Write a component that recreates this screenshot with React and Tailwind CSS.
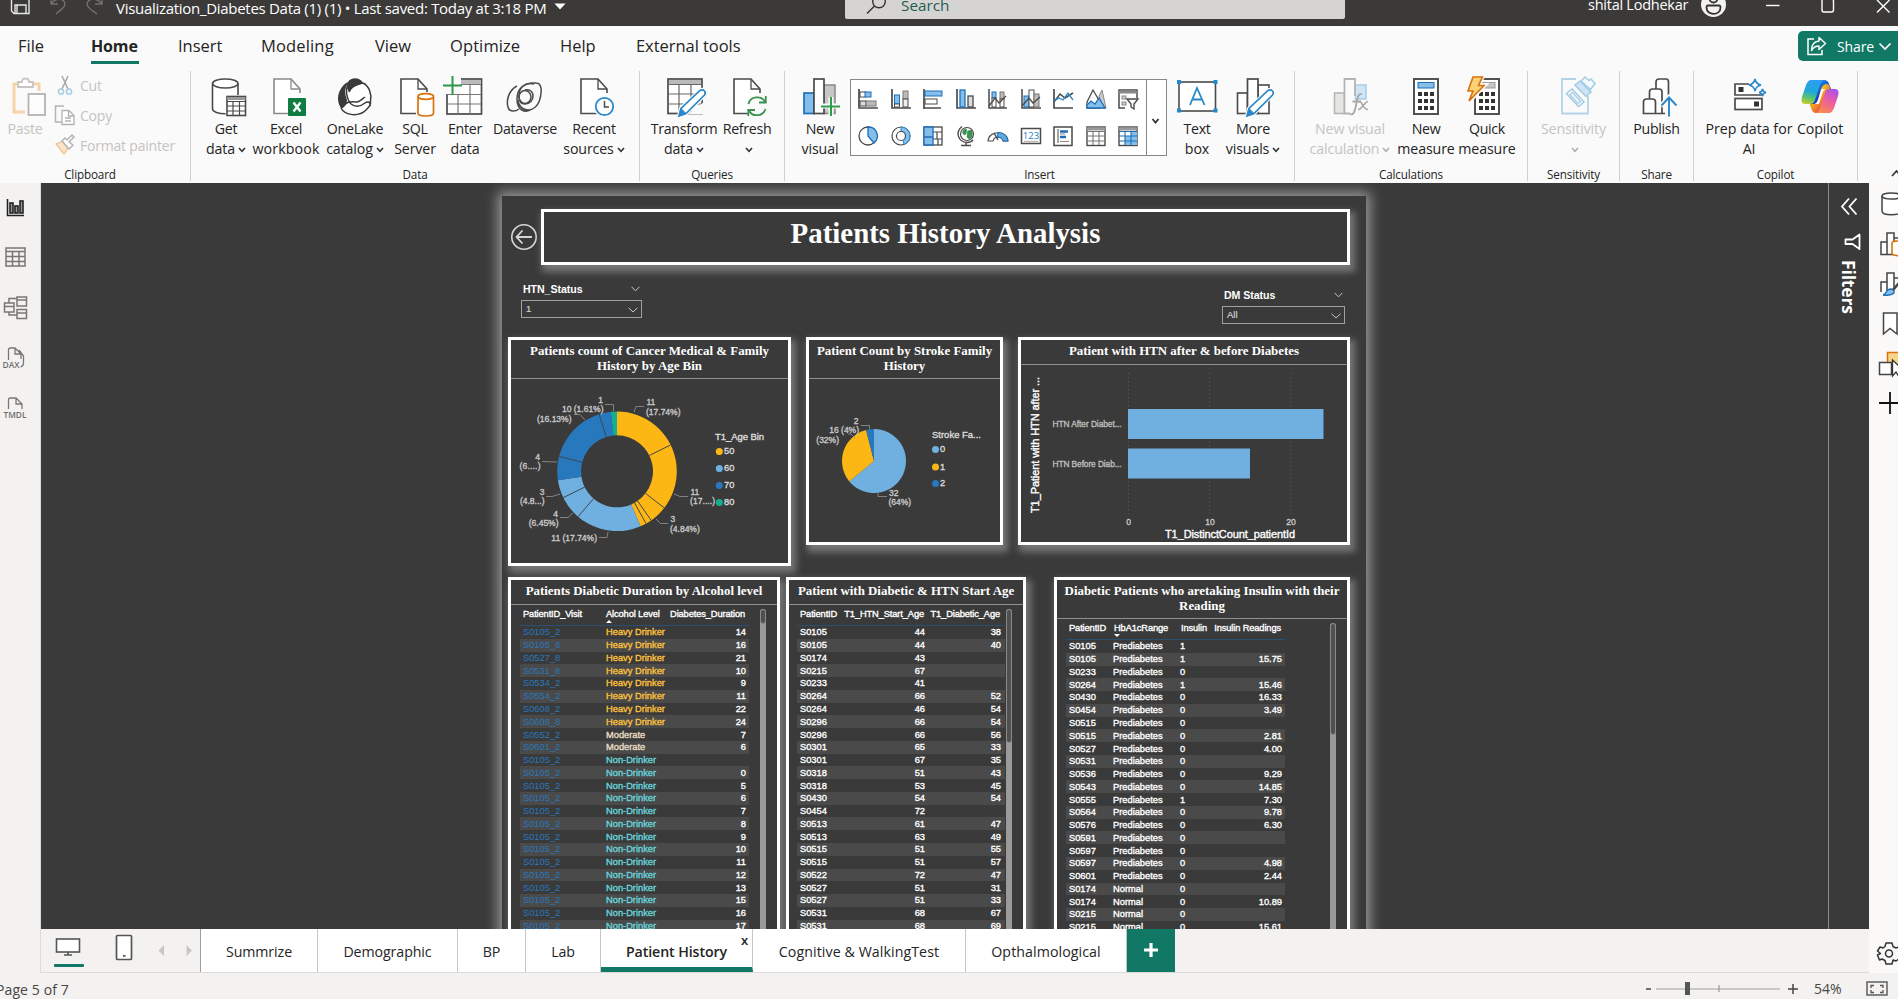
import React from "react";

const G = "#4a4a4a";

/* ---------- shared icon parts ---------- */

const Svg = ({ w = 40, h = 42, className = "", children, vb }) => (
  <svg width={w} height={h} viewBox={vb || `0 0 ${w} ${h}`} fill="none" className={`block shrink-0 overflow-visible ${className}`}>
    {children}
  </svg>
);

const PageShape = ({ x, stroke = G }) => (
  <g stroke={stroke} strokeWidth="1.6">
    <path d={`M${x + 26} 17V13L${x + 17} 3H${x}V37.5H${x + 16}`} fill="#fff" />
    <path d={`M${x + 17} 3V13H${x + 26}`} strokeWidth="1.3" />
  </g>
);

const Pencil = ({ x = 0, y = 0 }) => (
  <g transform={`translate(${x} ${y})`}>
    <path d="M13 40L15 32.5L34 14.5Q36.500 13 38.500 15Q40 17 38.500 19L20 37.500Z" fill="#fff" stroke="#fafafa" strokeWidth="4" />
    <path d="M13 40L15 32.5L34 14.5Q36.500 13 38.500 15Q40 17 38.500 19L20 37.500Z" fill="#fff" stroke="#2b88c8" strokeWidth="1.7" />
    <path d="M13 40L15 32.5L20 37.5Z" fill="#2b88c8" stroke="#2b88c8" />
  </g>
);

const Calc = ({ x, fill, stroke, w = 24 }) => (
  <g>
    <rect x={x} y="3" width={w} height="35" fill="#fff" stroke={G} strokeWidth="1.9" />
    <rect x={x + 4} y="6.500" width={w - 8} height="5.500" fill={fill} stroke={stroke} />
    {[16, 23, 30].map((yy) =>
      [4, 10, 16].map((xx) => <rect key={yy + "-" + xx} x={x + xx} y={yy} width="4" height="4" fill="#333" />)
    )}
  </g>
);

/* ---------- ribbon icons ---------- */

const GetData = () => (
  <Svg>
    <path d="M6.500 7.500V32.500C6.500 39.500 32 39.500 32 32.500V7.500" fill="#fff" stroke={G} strokeWidth="1.6" />
    <ellipse cx="19.300" cy="7.500" rx="12.700" ry="4.500" fill="#fff" stroke={G} strokeWidth="1.6" />
    <rect x="19.500" y="19" width="22" height="22" fill="#fafafa" />
    <rect x="21" y="20.500" width="18.500" height="19" fill="#fff" stroke={G} strokeWidth="1.6" />
    <path d="M21 22.500H39.500" stroke="#999" strokeWidth="3" />
    <path d="M21 25.500H39.500M21 30H39.500M21 35H39.500M27 25V39M33.500 25V39" stroke={G} strokeWidth="1.2" />
  </Svg>
);
const Excel = () => (
  <Svg>
    <PageShape x={8} stroke="#8a8a8a" />
    <rect x="22" y="22" width="18" height="18" rx="1" fill="#107c41" />
    <path d="M27.500 26.500L34.500 35.500M34.500 26.500L27.500 35.500" stroke="#fff" strokeWidth="2.400" />
  </Svg>
);
const OneLake = () => (
  <Svg>
    <circle cx="20" cy="21" r="15.500" fill="#fff" />
    <path d="M11 7C2 14 1 25 6 32C9 33 12 28 12 24C9 16 10 11 14 6Z" fill="#3a3a3a" />
    <path d="M13 6C16 1 25 1 28 7C24 9 18 10 14 16C12 12 11 9 13 6Z" fill="#3a3a3a" />
    <path d="M14 7C10 13 11 22 16 28C20 31 25 31 30 27C33 25 36 26 35 30M28 7C34 10 37 18 35.500 25M6 32C10 40 24 41 31 34C34 31 36 29 35.500 25M14 16C16 10 22 8 28 7M6 32C12 24 18 26 22 26C26 25 27 23 30 21" stroke="#3a3a3a" strokeWidth="1.500" />
  </Svg>
);
const Sql = () => (
  <Svg>
    <PageShape x={6} />
    <path d="M21 16H41V42H21Z" fill="#fafafa" />
    <path d="M23 21V37C23 41 38.500 41 38.500 37V21" fill="#fff" stroke="#d9730d" strokeWidth="1.700" />
    <ellipse cx="30.750" cy="20.500" rx="7.750" ry="2.800" fill="#fff" stroke="#d9730d" strokeWidth="1.700" />
  </Svg>
);
const EnterData = () => (
  <Svg>
    <rect x="2" y="3" width="34.500" height="35" fill="#fff" stroke={G} strokeWidth="1.700" />
    <rect x="13" y="4" width="23" height="4" fill="#bbb" />
    <path d="M2 8.500H36M2 18.500H36M2 28H36M13 9V38M25 9V38" stroke="#777" strokeWidth="1.200" />
    <path d="M-1 1H16V18H-1Z" fill="#fafafa" />
    <path d="M7.500 0V19M-2 9.500H17" stroke="#2e9648" strokeWidth="2" />
  </Svg>
);
const Dataverse = () => (
  <Svg>
    <g stroke={G} strokeWidth="1.500">
      <path d="M27 33C20 38 12 34 12 23C12 12 20 6 31 7C35 7 37 11 36 17C35 28 30 33 24 34C17 34 13 29 13 24" />
      <path d="M29 8C19 6 14 12 14 20C14 25 16 28 20 28C25 28 28 24 28 20C28 15 24 13 20 14" />
      <path d="M12 10C4 14 1 24 3 31C4 36 10 36 14 33" />
      <ellipse cx="20" cy="21" rx="6" ry="6.500" />
    </g>
  </Svg>
);
const Recent = () => (
  <Svg>
    <PageShape x={7} />
    <circle cx="30.500" cy="30.500" r="11" fill="#fafafa" />
    <circle cx="30.500" cy="30.500" r="8.700" fill="#fff" stroke="#2b88c8" strokeWidth="1.800" />
    <path d="M30.500 25V31H35" stroke={G} strokeWidth="1.500" />
  </Svg>
);
const Transform = () => (
  <Svg>
    <rect x="4" y="3" width="34" height="34.500" fill="#fff" stroke={G} strokeWidth="1.700" />
    <rect x="5" y="4" width="32" height="4" fill="#bbb" />
    <path d="M4 8.500H38M4 18H38M4 28H38M15 9V37M27 9V37" stroke="#666" strokeWidth="1.200" />
    <path d="M24 38H40V26Z" fill="#fafafa" />
    <Pencil x={2} />
  </Svg>
);
const Refresh = () => (
  <Svg>
    <PageShape x={7} />
    <circle cx="30" cy="30.500" r="11.500" fill="#fafafa" />
    <path d="M21.500 28C23 20 35 19 38 26M38.500 33C36 41 25 41 22 34.500M38.800 20V26.500H32M21.300 40V34H28" stroke="#3a9150" strokeWidth="1.800" />
  </Svg>
);
const NewVisual = () => (
  <Svg>
    <rect x="24" y="9" width="11" height="28.500" fill="#c8c6c4" stroke="#8a8886" strokeWidth="1.500" />
    <rect x="4" y="17" width="10" height="20.500" fill="#83beec" stroke="#1f6fb5" strokeWidth="1.700" />
    <rect x="14" y="3" width="10" height="34.500" fill="#fff" stroke={G} strokeWidth="1.700" />
    <path d="M22 30H40M31 21V40" stroke="#fafafa" strokeWidth="5" />
    <path d="M21 30.500H40M31 21V40" stroke="#2e9f48" strokeWidth="2" />
  </Svg>
);
const TextBox = () => (
  <Svg>
    <rect x="2" y="6" width="36.500" height="29" fill="#fff" stroke={G} strokeWidth="1.600" />
    {[[0, 4], [36.500, 4], [0, 32.500], [36.500, 32.500]].map(([x, y]) => (
      <rect key={x + "," + y} x={x} y={y} width="4" height="4" fill="#1f8ad1" />
    ))}
    <path d="M13 29L20 12L27.500 29M15.500 23.500H25" stroke="#2b88c8" strokeWidth="1.800" />
  </Svg>
);
const MoreVisuals = () => (
  <Svg>
    <rect x="25" y="9" width="11" height="28.500" fill="#fff" stroke={G} strokeWidth="1.600" />
    <rect x="4.500" y="17" width="10" height="20.500" fill="#fff" stroke={G} strokeWidth="1.600" />
    <rect x="14.500" y="3" width="10.500" height="34.500" fill="#fff" stroke={G} strokeWidth="1.700" />
    <Pencil x={1} />
  </Svg>
);
const VisualCalc = () => (
  <Svg>
    <rect x="25" y="9" width="11" height="14" fill="#cfe4f5" stroke="#a8cde8" strokeWidth="1.500" />
    <rect x="4.500" y="17" width="10" height="20.500" fill="#e8e6e4" stroke="#b5b3b1" strokeWidth="1.500" />
    <path d="M25 20V3H14.500V37.500H20" fill="#fafafa" stroke="#b5b3b1" strokeWidth="1.800" />
    <g stroke="#a9a7a5" strokeWidth="1.800">
      <path d="M20 38C24 40 25 34 26.500 27C27.500 20 29 17 32 18.500M22.500 25.500H31" />
      <path d="M29 26C32 24 33 34 38 33.500M38 25.500C34 26 32 34 28 33.500" strokeWidth="1.600" />
    </g>
  </Svg>
);
const NewMeasure = () => (
  <Svg>
    <Calc x={8} fill="#83beec" stroke="#1f6fb5" />
  </Svg>
);
const QuickMeasure = () => (
  <Svg>
    <Calc x={8} fill="#c8c6c4" stroke="#999" />
    <path d="M6 0H16L12 9H18L2 26L6 15H0Z" fill="#fbd277" stroke="#fafafa" strokeWidth="4" />
    <path d="M6 1H15.500L11.500 9.500H17L2 25L6 15H1Z" fill="#fbd277" stroke="#d9730d" strokeWidth="1.600" />
  </Svg>
);
const Sensitivity = () => (
  <Svg>
    <path d="M22 3H8V37.500H34V20" stroke="#b3d4e8" strokeWidth="1.800" />
    <g stroke="#a5cce4" strokeWidth="1.600" fill="#f4fafd">
      <path d="M12.500 17.500L18 13L30 26L24.500 30.500Z" />
      <path d="M16 18.500L18.500 16.500L26.500 25.500L24 27.500Z" fill="none" strokeWidth="1.200" />
      <path d="M21 9L26 5L37 16L32 20.500Z" fill="#cfe4f5" />
      <path d="M27 5L31 1L35 4.500L37 3L41 7.500L36.500 13.500Z" />
    </g>
  </Svg>
);
const Publish = () => (
  <Svg>
    <g stroke={G} strokeWidth="1.700" fill="#fff">
      <path d="M19 37V6Q19 3 22 3H29Q31.500 3 31.500 6V20" />
      <path d="M12.500 37V16Q12.500 13 15.500 13H22Q25 13 25 16V37" />
      <path d="M6.500 37.500V26Q6.500 23 9.500 23H15.500Q18.500 23 18.500 26V37.500ZM6.500 37.500H28" />
    </g>
    <path d="M32 41V22M24 30L32 21.500L40 30" stroke="#fafafa" strokeWidth="5" />
    <path d="M32 40.500V22M24.500 29.500L32 21.500L39.500 29.500" stroke="#2b88c8" strokeWidth="1.900" />
  </Svg>
);
const PrepData = () => (
  <Svg>
    <g stroke={G} strokeWidth="1.700" fill="#fff">
      <path d="M20 8H6V19H33V17" />
      <rect x="6" y="22.500" width="27" height="11" />
    </g>
    <rect x="9.500" y="11" width="5" height="5" fill="#333" />
    <rect x="25" y="25.500" width="5" height="5" fill="#333" />
    <path d="M26 3Q27 8 32 9Q27 10 26 15Q25 10 20 9Q25 8 26 3ZM33.500 13Q34 16 37 16.500Q34 17 33.500 20Q33 17 30 16.500Q33 16 33.500 13Z" stroke="#2b88c8" strokeWidth="1.600" fill="#fff" />
  </Svg>
);
const Copilot = () => (
  <Svg>
    <defs>
      <linearGradient id="cpA" x1="12" y1="3" x2="6" y2="30" gradientUnits="userSpaceOnUse">
        <stop offset="0" stopColor="#2f9df4" /><stop offset=".45" stopColor="#1fa8d8" /><stop offset=".7" stopColor="#5cc46a" /><stop offset="1" stopColor="#f2ce1c" />
      </linearGradient>
      <linearGradient id="cpB" x1="34" y1="12" x2="22" y2="37" gradientUnits="userSpaceOnUse">
        <stop offset="0" stopColor="#a34ff0" /><stop offset=".45" stopColor="#e85aa8" /><stop offset="1" stopColor="#fb8b4b" />
      </linearGradient>
      <linearGradient id="cpC" x1="20" y1="4" x2="28" y2="13" gradientUnits="userSpaceOnUse">
        <stop offset="0" stopColor="#1b8fe6" /><stop offset="1" stopColor="#1a3fc4" />
      </linearGradient>
      <linearGradient id="cpD" x1="8" y1="28" x2="18" y2="36" gradientUnits="userSpaceOnUse">
        <stop offset="0" stopColor="#f6c51c" /><stop offset="1" stopColor="#ee5a3a" />
      </linearGradient>
    </defs>
    <path d="M17 4H24Q28 4 29 8L31 13H27Q23 13 22 17L19 28Q17 33 14 33Q11 32 10 28Z" fill="url(#cpC)" />
    <path d="M23 37H16Q12.500 37 11.500 33L9.500 28H14Q17 28 18 24L21 13Q23 8 27 8Q30 9 30 13Z" fill="url(#cpD)" />
    <path d="M11 4H24Q21 5 20 9L15 24Q14 28 10 28H5Q0 28 2 21L6 9Q8 4 11 4Z" fill="url(#cpA)" />
    <path d="M29 37H16Q19 36 20 32L25 17Q26 13 30 13H35Q40 13 38 20L34 32Q32 37 29 37Z" fill="url(#cpB)" />
    <path d="M21.500 13H25.500Q23.500 14 22.500 17L19 28H14.500Q17 27 18 24Z" fill="#fff" />
  </Svg>
);

const Chev = ({ className = "text-[#333]" }) => (
  <svg width="8" height="6" viewBox="0 0 8 6" fill="none" className={`mt-[2px] ml-[3px] inline-block ${className}`}>
    <path d="M1 1L4 4.300L7 1" stroke="currentColor" strokeWidth="1.600" />
  </svg>
);

/* ---------- ribbon layout ---------- */

const Item = ({ w, icon, a, b, chev, off }) => (
  <div className={`flex shrink-0 flex-col items-center ${w} ${off ? "text-[#c5c3c1]" : "text-[#242424]"}`}>
    {icon}
    <div className="mt-[1px] flex h-5 items-center text-[14.200px] tracking-[-0.3px] whitespace-nowrap">{a}</div>
    <div className="flex h-5 items-center text-[14.200px] tracking-[-0.120px] whitespace-nowrap">
      {b}
      {chev && <Chev className={off ? "text-[#b0aeac]" : "text-[#333]"} />}
    </div>
  </div>
);

const Group = ({ w, pad, label, children }) => (
  <div className={`flex h-full shrink-0 flex-col ${w} border-r border-[#d2d0ce]`}>
    <div className={`flex h-[90px] pt-[5px] ${pad}`}>{children}</div>
    <div className="flex h-[20px] items-center justify-center pt-[7px] text-[11.700px] tracking-[-0.15px] text-[#242424]">{label}</div>
  </div>
);

const galleryIcons = [
  <g key="0"><path d="M1 0V19H20" stroke={G} strokeWidth="1.700" /><rect x="2" y="3" width="6" height="5" fill="#fff" stroke={G} /><rect x="7" y="3" width="6" height="5" fill="#83beec" stroke="#1f6fb5" /><rect x="2" y="12" width="6" height="5" fill="#ddd" stroke={G} /><rect x="8" y="12" width="10" height="5" fill="#bbb" stroke="#777" /></g>,
  <g key="1"><path d="M1 0V19H20" stroke={G} strokeWidth="1.700" /><rect x="3.500" y="6" width="5" height="9" fill="#83beec" stroke="#1f6fb5" /><rect x="3.500" y="15" width="5" height="3" fill="#fff" stroke={G} /><rect x="12" y="2" width="5" height="8" fill="#bbb" stroke="#777" /><rect x="12" y="10" width="5" height="8" fill="#eee" stroke={G} /></g>,
  <g key="2"><path d="M1 0V20" stroke={G} strokeWidth="1.700" /><rect x="2" y="2" width="17" height="5" fill="#83beec" stroke="#1f6fb5" /><rect x="2" y="10" width="12" height="5" fill="#fff" stroke={G} /><path d="M1 19H18" stroke={G} strokeWidth="1.500" /></g>,
  <g key="3"><path d="M1 0V19H20" stroke={G} strokeWidth="1.700" /><rect x="4" y="1" width="5" height="17" fill="#83beec" stroke="#1f6fb5" strokeWidth="1.300" /><rect x="12" y="7" width="5" height="11" fill="#ddd" stroke={G} strokeWidth="1.300" /></g>,
  <g key="4"><path d="M1 0V19H19" stroke={G} strokeWidth="1.500" /><rect x="4" y="3" width="4" height="6" fill="#83beec" stroke="#1f6fb5" /><rect x="4" y="9" width="4" height="9" fill="#fff" stroke={G} /><rect x="12" y="3" width="4" height="7" fill="#bbb" stroke="#777" /><rect x="12" y="10" width="4" height="8" fill="#fff" stroke={G} /><path d="M1 17L7 9L11 14L18 7" stroke={G} strokeWidth="1.300" /></g>,
  <g key="5"><path d="M1 0V19H20" stroke={G} strokeWidth="1.500" /><rect x="3" y="7" width="5" height="11" fill="#83beec" stroke="#1f6fb5" /><rect x="8" y="1" width="5" height="17" fill="#fff" stroke={G} /><rect x="13" y="5" width="5" height="13" fill="#bbb" stroke="#777" /><path d="M1 17L8 9L12 14L19 8" stroke={G} strokeWidth="1.300" /></g>,
  <g key="6"><path d="M1 0V19H20" stroke={G} strokeWidth="1.700" /><path d="M1 13L7 5L12 9L20 4" stroke={G} strokeWidth="1.500" /><path d="M1 12L6 9L10 11L15 4L20 11" stroke="#2b88c8" strokeWidth="1.300" /></g>,
  <g key="7"><path d="M13 7L16 1L20 19H16Z" fill="#ccc" stroke="#888" /><path d="M1 13L7 1L14 13V19H1Z" fill="#fff" stroke={G} strokeWidth="1.300" /><path d="M1 19V16L5 12L9 15L13 9L19 19Z" fill="#83beec" stroke="#1f6fb5" strokeWidth="1.300" /></g>,
  <g key="8"><path d="M7 19H1V1H19V9" stroke={G} strokeWidth="1.500" fill="#fff" /><path d="M1 3H19" stroke="#888" strokeWidth="3" /><rect x="4" y="7" width="4" height="3" fill="#ccc" stroke="#888" /><rect x="4" y="13" width="4" height="3" fill="#ccc" stroke="#888" /><path d="M9 10H20L16 15V20L13 18V15Z" fill="#fff" stroke={G} strokeWidth="1.400" /></g>,
  <g key="9"><circle cx="10" cy="10" r="9" fill="#fff" stroke={G} strokeWidth="1.300" /><path d="M10 1A9 9 0 0 1 16 17L10 10Z" fill="#83beec" stroke="#1f6fb5" strokeWidth="1.300" /></g>,
  <g key="10"><circle cx="10" cy="10" r="9" fill="#fff" stroke={G} strokeWidth="1.200" /><path d="M10 1A9 9 0 0 1 13 18.500L12 14A4.500 4.500 0 0 0 10 5.500Z" fill="#83beec" stroke="#2b88c8" /><circle cx="10" cy="10" r="4.500" fill="#fff" stroke={G} strokeWidth="1.200" /></g>,
  <g key="11"><rect x="1" y="1" width="18" height="18" fill="#fff" stroke={G} strokeWidth="1.300" /><path d="M1 1H10V11H1ZM1 11H10V19H1Z" fill="#83beec" stroke="#1f6fb5" strokeWidth="1.300" /><path d="M10 6H19M14 6V13M10 13H19M15 13V19" stroke={G} strokeWidth="1.200" /></g>,
  <g key="12"><circle cx="11" cy="8" r="6.500" fill="#fff" stroke={G} strokeWidth="1.200" /><path d="M6.500 6Q8 2 10.500 3Q11 7 9 9Q7 9 6.500 6ZM11.500 5L15.500 4Q17.500 8 15 12Q12 14 11 11Z" fill="#3a9150" stroke="#3a9150" strokeWidth="0.600" /><path d="M6 0.500C-1 6 2 16 11 16.500Q15 16.500 17 14M10 16V19M5 19.500H15" stroke={G} strokeWidth="1.400" /></g>,
  <g key="13"><path d="M0 15C1 4 19 4 20 15H15C14 10 6 10 5 15Z" fill="#fff" stroke={G} strokeWidth="1.200" /><path d="M10 6.500C16 6.500 19 10 20 15H15C14.500 12 12 11 9 11Z" fill="#5ea9e0" stroke="#1f6fb5" /><path d="M10 14L6 7" stroke={G} strokeWidth="1.400" /></g>,
  <g key="14"><rect x="0.500" y="2.500" width="19" height="15" fill="#fff" stroke={G} strokeWidth="1.500" /><path d="M3 15.500H17" stroke="#bbb" strokeWidth="1.500" /><text x="10" y="13" fontSize="9.500" textAnchor="middle" fill="#1f7bc8" fontFamily="Open Sans">123</text></g>,
  <g key="15"><rect x="1" y="1" width="18" height="18.500" fill="#fff" stroke={G} strokeWidth="1.500" /><path d="M5 3V17" stroke={G} /><path d="M7 5.500H15M7 11H13" stroke="#1f6fb5" strokeWidth="2.500" /><path d="M7 8H12M7 15.500H16" stroke="#888" strokeWidth="1.200" /></g>,
  <g key="16"><rect x="1" y="1" width="18" height="18.500" fill="#fff" stroke={G} strokeWidth="1.400" /><path d="M1 3H19" stroke="#999" strokeWidth="3" /><path d="M1 5.500H19M1 10H19M1 15H19M7 5V19M13 5V19" stroke="#777" strokeWidth="1.100" /></g>,
  <g key="17"><rect x="1" y="1" width="18" height="18.500" fill="#fff" stroke={G} strokeWidth="1.400" /><path d="M1 3H19" stroke="#999" strokeWidth="3" /><path d="M13 5.500H19V19H7V10H13Z" fill="#83beec" /><path d="M1 5.500H19M1 10H19M1 15H19M7 5V19M13 5V19" stroke="#1f6fb5" strokeWidth="1.100" /></g>,
];

const Gallery = () => (
  <div className="ml-[3px] mt-[3px] flex h-[77px] w-[317px] shrink-0 border border-[#8a8886] bg-white">
    <div className="grid flex-1 grid-cols-[repeat(9,32.500px)] grid-rows-[37px_37px] pl-[1px]">
      {galleryIcons.map((g, i) => (
        <div key={i} className="flex items-center justify-center">
          <Svg w={20} h={20}>{g}</Svg>
        </div>
      ))}
    </div>
    <div className="flex w-[20px] items-center justify-center border-l border-[#8a8886] pt-[7px]">
      <svg width="9" height="7" viewBox="0 0 9 7" fill="none" className="-ml-[2px]"><path d="M1.500 1L4.500 4.500L7.500 1" stroke="#333" strokeWidth="1.800" /></svg>
    </div>
  </div>
);

const TitleBar = () => (
  <header className="flex h-[26px] items-start overflow-hidden bg-[#3b3a39] text-white">
    <div className="flex h-[26px] w-[116px] shrink-0">
      <Svg w={116} h={26}>
        <path d="M11.500 -4V11L14 13.500H29V-4M15 13V5H26V13M17 5V13" stroke="#e6e6e6" strokeWidth="1.400" />
        <path d="M51 -2V4H58M51 4C56 -3 64 -2 65 4C65 8 60 10 56 14" stroke="#72706e" strokeWidth="1.400" />
        <path d="M102 -2V4H95M102 4C97 -3 88 -2 87 4C87 8 92 10 97 14" stroke="#72706e" strokeWidth="1.400" />
      </Svg>
    </div>
    <div className="mt-[-3px] flex w-[729px] shrink-0 items-center text-[15px] leading-[22px] tracking-[-0.290px] whitespace-nowrap">
      Visualization_Diabetes Data (1) (1) • Last saved: Today at 3:18 PM
      <svg width="12" height="7" viewBox="0 0 12 7" className="ml-[8px] mt-[-4px]"><path d="M0.500 0.500H11.500L6 6.500Z" fill="#fff" /></svg>
    </div>
    <div className="flex h-[19px] w-[500px] shrink-0 items-start rounded-b-[2px] bg-[#d5d4d2] pl-[21px]">
      <Svg w={22} h={16}>
        <circle cx="13" cy="1.500" r="6.300" stroke="#333" strokeWidth="1.400" />
        <path d="M8.500 6L1 13.500" stroke="#333" strokeWidth="1.500" />
      </Svg>
      <span className="mt-[-6px] ml-[13px] text-[15.300px] leading-[22px] text-[#1f5c50]">Search</span>
    </div>
    <span className="mt-[-6px] ml-[243px] w-[113px] shrink-0 text-[14.500px] leading-[22px] tracking-[-0.25px] whitespace-nowrap">shital Lodhekar</span>
    <Svg w={197} h={20}>
      <circle cx="12.500" cy="4.500" r="12.500" fill="#f3f2f1" />
      <path d="M5.500 7.500Q5.500 5.500 7 5.500H18Q19.500 5.500 19.500 7.500C19.500 16 5.500 16 5.500 7.500Z" stroke="#333" strokeWidth="1.800" />
      <circle cx="12.500" cy="-1.500" r="4" stroke="#333" strokeWidth="1.800" />
      <path d="M65 5.500H78.500" stroke="#fff" strokeWidth="1.400" />
      <rect x="121" y="-1" width="11.500" height="13" rx="2" stroke="#fff" strokeWidth="1.400" />
      <path d="M176 0L188.500 12.500M188.500 0L176 12.500" stroke="#fff" strokeWidth="1.400" />
    </Svg>
  </header>
);

const Menu = () => (
  <nav className="flex h-[45px] items-start pl-[18px] pt-[5px] text-[16.500px] text-[#242424]">
    <span className="w-[73px] leading-[30px]">File</span>
    <span className="flex w-[87px] flex-col items-start">
      <span className="text-[16px] leading-[30px] font-bold tracking-[-0.150px]">Home</span>
      <span className="h-[3px] w-[48px] bg-[#117865]" />
    </span>
    <span className="w-[83px] leading-[30px]">Insert</span>
    <span className="w-[114px] leading-[30px] tracking-[0.150px]">Modeling</span>
    <span className="w-[75px] leading-[30px]">View</span>
    <span className="w-[110px] leading-[30px] tracking-[0.100px]">Optimize</span>
    <span className="w-[76px] leading-[30px]">Help</span>
    <span className="w-[200px] leading-[30px] tracking-[-0.050px]">External tools</span>
    <div className="ml-auto flex h-[30px] w-[100px] items-center rounded-l-[5px] bg-[#117865] pl-[9px] text-white">
      <Svg w={20} h={20}>
        <path d="M7 3H1V18.500H15V14" stroke="#fff" strokeWidth="1.500" />
        <path d="M12 1.500L18.500 7.500L12 13.500V10C8 10 6 12 4.500 14.500C4.500 9 7.500 5.500 12 5Z" stroke="#fff" strokeWidth="1.500" strokeLinejoin="round" />
      </Svg>
      <span className="ml-[10px] text-[14px] font-medium tracking-[-0.1px]">Share</span>
      <svg width="14" height="9" viewBox="0 0 14 9" fill="none" className="ml-[4px] shrink-0"><path d="M1.500 1.500L7 7L12.500 1.500" stroke="#fff" strokeWidth="1.700" /></svg>
    </div>
  </nav>
);

const Ribbon = () => (
  <div className="flex h-[110px] items-start">
    <Group w="w-[191px]" pad="pl-[4px]" label={<span className="-ml-[10px]">Clipboard</span>}>
      <div className="flex w-[42px] flex-col items-center text-[#c5c3c1]">
        <Svg>
          <path d="M15 8H9V36H20" stroke="#f7d3a8" strokeWidth="3" />
          <path d="M28 8H34V15" stroke="#f7d3a8" strokeWidth="3" />
          <path d="M13 11V6H17Q17 2.500 20.500 2.500T24 6H28V11Z" fill="#fff" stroke="#c8c6c4" strokeWidth="1.800" />
          <rect x="23.500" y="18" width="16.500" height="21" fill="#fdfdfd" stroke="#b5b3b1" strokeWidth="1.800" />
        </Svg>
        <div className="mt-[1px] flex h-5 items-center text-[14.200px] tracking-[-0.2px]">Paste</div>
      </div>
      <div className="ml-[9px] flex flex-col text-[14px] tracking-[-0.2px] text-[#c5c3c1]">
        <div className="-mt-[1px] flex h-[20px] items-center gap-[5px]">
          <Svg w={20} h={20}>
            <path d="M7 1L13 14M13 1L7 14" stroke="#a9a7a5" strokeWidth="1.500" />
            <circle cx="6" cy="16.500" r="2.600" stroke="#a5cce4" strokeWidth="1.500" /><circle cx="14" cy="16.500" r="2.600" stroke="#a5cce4" strokeWidth="1.500" />
          </Svg>
          Cut
        </div>
        <div className="mt-[10px] flex h-[20px] items-center gap-[5px]">
          <Svg w={20} h={20}>
            <path d="M9 1H0.500V17H7" stroke="#b5b3b1" strokeWidth="1.500" />
            <path d="M7 5.500H14L19 10.500V19.500H7ZM13.500 5.500V11H19M10 13H16M10 16H16" fill="#fff" stroke="#b5b3b1" strokeWidth="1.300" />
          </Svg>
          Copy
        </div>
        <div className="mt-[10px] flex h-[20px] items-center gap-[5px] whitespace-nowrap">
          <Svg w={20} h={20}>
            <path d="M1 9L8 6L13 13L9 19Z" fill="#fbe3c8" stroke="#eec291" strokeWidth="1.300" />
            <path d="M7 6L14 14L18 10L14 7L19 2L17 0L12 5L10 3Z" fill="#fff" stroke="#b5b3b1" strokeWidth="1.500" />
          </Svg>
          Format painter
        </div>
      </div>
    </Group>
    <Group w="w-[449px]" pad="pl-[10px]" label="Data">
      <Item w="w-[50px]" icon={<GetData />} a="Get" b="data" chev />
      <Item w="w-[70px]" icon={<Excel />} a="Excel" b={<span className="tracking-[0.150px]">workbook</span>} />
      <Item w="w-[68px]" icon={<OneLake />} a="OneLake" b="catalog" chev />
      <Item w="w-[52px]" icon={<Sql />} a="SQL" b="Server" />
      <Item w="w-[48px]" icon={<EnterData />} a="Enter" b="data" />
      <Item w="w-[72px]" icon={<Dataverse />} a="Dataverse" />
      <Item w="w-[66px]" icon={<Recent />} a="Recent" b="sources" chev />
    </Group>
    <Group w="w-[145px]" pad="pl-[9px]" label="Queries">
      <Item w="w-[70px]" icon={<Transform />} a="Transform" b="data" chev />
      <Item w="w-[56px]" icon={<Refresh />} a="Refresh" b="" chev />
    </Group>
    <Group w="w-[510px]" pad="pl-[8px]" label="Insert">
      <Item w="w-[54px]" icon={<NewVisual />} a="New" b="visual" />
      <Gallery />
      <Item w="w-[60px]" icon={<TextBox />} a="Text" b="box" />
      <Item w="w-[52px]" icon={<MoreVisuals />} a="More" b="visuals" chev />
    </Group>
    <Group w="w-[233px]" pad="pl-[9px]" label="Calculations">
      <Item w="w-[92px]" icon={<VisualCalc />} a={<span className="tracking-[-0.100px]">New visual</span>} b="calculation" chev off />
      <Item w="w-[60px]" icon={<NewMeasure />} a="New" b="measure" />
      <Item w="w-[62px]" icon={<QuickMeasure />} a="Quick" b="measure" />
    </Group>
    <Group w="w-[92px]" pad="" label="Sensitivity">
      <Item w="w-[91px]" icon={<Sensitivity />} a={<span className="tracking-[-0.100px]">Sensitivity</span>} b="" chev off />
    </Group>
    <Group w="w-[74px]" pad="" label="Share">
      <Item w="w-[73px]" icon={<Publish />} a="Publish" />
    </Group>
    <Group w="w-[164px]" pad="pl-[10px]" label="Copilot">
      <Item w="w-[90px]" icon={<PrepData />} a={<span className="tracking-[0]">Prep data for</span>} b="AI" />
      <Item w="w-[52px]" icon={<Copilot />} a={<span className="tracking-[-0.100px]">Copilot</span>} />
    </Group>
    <svg width="10" height="8" viewBox="0 0 10 8" fill="none" className="mt-[98px] ml-[33px] shrink-0"><path d="M1 7L5.500 2L10 7" stroke="#333" strokeWidth="1.700" /></svg>
  </div>
);

/* ---------- report ---------- */

const card = "shrink-0 border-[3px] border-white bg-[#3a3a3a] shadow-[3px_5px_7px_2px_#777]";

const CardTitle = ({ children, h }) => (
  <div className={`${h} border-b border-[#8f8f8f] pt-[4px] text-center font-['Liberation_Serif',serif] text-[12.900px] leading-[15px] font-bold whitespace-nowrap text-white`}>{children}</div>
);

const polar = (cx, cy, r, v, total) => {
  const a = (v / total) * Math.PI * 2;
  return `${(cx + r * Math.sin(a)).toFixed(2)} ${(cy - r * Math.cos(a)).toFixed(2)}`;
};
const arc = (cx, cy, R, r, from, to, total) => {
  const big = (to - from) / total > 0.5 ? 1 : 0;
  return `M${polar(cx, cy, R, from, total)}A${R} ${R} 0 ${big} 1 ${polar(cx, cy, R, to, total)}L${polar(cx, cy, r, to, total)}A${r} ${r} 0 ${big} 0 ${polar(cx, cy, r, from, total)}Z`;
};

const Label = ({ x, y, children, anchor = "start", size = 8.5, fill = "#c8c8c8", w }) => (
  <text x={x} y={y} fontSize={size} textAnchor={anchor} fill={fill} stroke={fill} strokeWidth="0.350" textLength={w} fontFamily="Liberation Sans, sans-serif">{children}</text>
);

const Donut = () => (
  <svg width="277" height="184" viewBox="511 379 277 184" fill="none" className="block">
    <path d={arc(617, 471.300, 59.800, 36, 0, 27, 62)} fill="#fdb714" />
    <path d={arc(617, 471.300, 59.800, 36, 27, 45, 62)} fill="#70b0e0" />
    <path d={arc(617, 471.300, 59.800, 36, 45, 61, 62)} fill="#2878bd" />
    <path d={arc(617, 471.300, 59.800, 36, 61, 62, 62)} fill="#12b090" />
    {[11, 22, 25, 26, 38, 42, 49, 59].map((v) => (
      <path key={v} d={`M${polar(617, 471.300, 36, v, 62)}L${polar(617, 471.300, 59.800, v, 62)}`} stroke="#3f4650" strokeWidth="1" />
    ))}
    <path d="M605 404.500H613.500V411M634 412L636 406.500H644M574 414.500H580L585 420M542 461.500L557 462M546 496.500H552L560 494M560 517.500H568L573 513M599 537.500H607L608 532M656 519L660.500 523.500H668M674 494L680 496.500H688" stroke="#8a8a8a" strokeWidth="0.900" />
    <Label x={603} y={402.500} anchor="end">1</Label>
    <Label x={603.500} y={411.700} anchor="end">(1.61%)</Label>
    <Label x={571.500} y={412} anchor="end">10</Label>
    <Label x={571.500} y={421.500} anchor="end">(16.13%)</Label>
    <Label x={646.500} y={405}>11</Label>
    <Label x={646} y={414.500}>(17.74%)</Label>
    <Label x={540} y={459.500} anchor="end">4</Label>
    <Label x={540.500} y={468.500} anchor="end" w={21}>(6....)</Label>
    <Label x={544.500} y={494.500} anchor="end">3</Label>
    <Label x={544.500} y={503.500} anchor="end">(4.8...)</Label>
    <Label x={558} y={516.500} anchor="end">4</Label>
    <Label x={558.500} y={525.500} anchor="end">(6.45%)</Label>
    <Label x={597} y={540.500} anchor="end">11 (17.74%)</Label>
    <Label x={690.500} y={494.500}>11</Label>
    <Label x={690} y={503.500} w={25}>(17....)</Label>
    <Label x={670.500} y={521.500}>3</Label>
    <Label x={670} y={531.500}>(4.84%)</Label>
    <Label x={715} y={440} size={9.500} fill="#dcdcdc" w={49}>T1_Age Bin</Label>
    {[["50", "#fdb714", 451], ["60", "#70b0e0", 468], ["70", "#2878bd", 485], ["80", "#12b090", 502]].map(([t, c, y]) => (
      <g key={t}><circle cx="719.300" cy={y + 0.500} r="3.500" fill={c} /><Label x={724} y={y + 3} size={9.300} fill="#dcdcdc">{t}</Label></g>
    ))}
  </svg>
);

const Pie = () => (
  <svg width="192" height="163" viewBox="809 379 192 163" fill="none" className="block">
    <path d={`M874 461L${polar(874, 461, 32, 0, 50)}A32 32 0 1 1 ${polar(874, 461, 32, 32, 50)}Z`} fill="#70b0e0" />
    <path d={`M874 461L${polar(874, 461, 32, 32, 50)}A32 32 0 0 1 ${polar(874, 461, 32, 48, 50)}Z`} fill="#fdb714" />
    <path d={`M874 461L${polar(874, 461, 32, 48, 50)}A32 32 0 0 1 ${polar(874, 461, 32, 50, 50)}Z`} fill="#2878bd" />
    <path d="M861 425.500H869.500V429M848 434H851L855 438M878 493V496.500H887" stroke="#8a8a8a" strokeWidth="0.900" />
    <Label x={858.500} y={423.500} anchor="end">2</Label>
    <Label x={859} y={433.300} anchor="end">16 (4%)</Label>
    <Label x={839} y={442.500} anchor="end">(32%)</Label>
    <Label x={889} y={495.500}>32</Label>
    <Label x={888.500} y={504.500}>(64%)</Label>
    <Label x={932} y={438} size={9.500} fill="#dcdcdc" w={49}>Stroke Fa...</Label>
    {[["0", "#70b0e0", 449], ["1", "#fdb714", 466.500], ["2", "#2878bd", 483]].map(([t, c, y]) => (
      <g key={t}><circle cx="935.500" cy={y + 0.500} r="3.500" fill={c} /><Label x={940} y={y + 3} size={9.300} fill="#dcdcdc">{t}</Label></g>
    ))}
  </svg>
);

const Bars = () => (
  <svg width="327" height="177" viewBox="1021 365 327 177" fill="none" className="block">
    <path d="M1128.500 373V516M1209.500 373V516M1291 373V516" stroke="#5c5c5c" strokeWidth="1" strokeDasharray="1 3" />
    <rect x="1128" y="409" width="195.500" height="30" fill="#70b0e0" />
    <rect x="1128" y="448.500" width="122" height="30" fill="#70b0e0" />
    <Label x={1052.500} y={427} size={8.300} fill="#bdbdbd" w={69}>HTN After Diabet...</Label>
    <Label x={1052.500} y={467} size={8.300} fill="#bdbdbd" w={69}>HTN Before Diab...</Label>
    <Label x={1128.500} y={525} anchor="middle">0</Label>
    <Label x={1210} y={525} anchor="middle">10</Label>
    <Label x={1291} y={525} anchor="middle">20</Label>
    <Label x={1165} y={538} size={11} fill="#fff" w={130}>T1_DistinctCount_patientId</Label>
    <g transform="translate(1038.500 513) rotate(-90)"><Label x={0} y={0} size={11} fill="#fff" w={136}>T1_Patient with HTN after ...</Label></g>
  </svg>
);

const alcohol = [
  ["S0105_2", "H", 14], ["S0105_8", "H", 16], ["S0527_8", "H", 21], ["S0531_8", "H", 10], ["S0534_2", "H", 9], ["S0554_2", "H", 11],
  ["S0608_2", "H", 22], ["S0608_8", "H", 24], ["S0552_2", "M", 7], ["S0601_2", "M", 6],
  ...["", 0, 5, 6, 7, 8, 9, 10, 11, 12, 13, 15, 16, 17].map((n) => ["S0105_2", "N", n]),
];
const levels = { H: ["Heavy Drinker", "text-[#fcc23d]"], M: ["Moderate", "text-[#e8dcc4]"], N: ["Non-Drinker", "text-[#68d4dc]"] };

const ages = `S0105 44 38|S0105 44 40|S0174 43|S0215 67|S0233 41|S0264 66 52|S0264 46 54|S0296 66 54|S0296 66 56|S0301 65 33|S0301 67 35|S0318 51 43|S0318 53 45|S0430 54 54|S0454 72|S0513 61 47|S0513 63 49|S0515 51 55|S0515 51 57|S0522 72 47|S0527 51 31|S0527 51 33|S0531 68 67|S0531 68 69`.split("|").map((r) => r.split(" "));
const insulin = `S0105 P 1|S0105 P 1 15.75|S0233 P 0|S0264 P 1 15.46|S0430 P 0 16.33|S0454 P 0 3.49|S0515 P 0|S0515 P 0 2.81|S0527 P 0 4.00|S0531 P 0|S0536 P 0 9.29|S0543 P 0 14.85|S0555 P 1 7.30|S0564 P 0 9.78|S0576 P 0 6.30|S0591 P 0|S0597 P 0|S0597 P 0 4.98|S0601 P 0 2.44|S0174 N 0|S0174 N 0 10.89|S0215 N 0|S0215 N 0 15.61`.split("|").map((r) => r.split(" "));

const rowBase = "grid h-[12.770px] items-center leading-[12px]";
const band = (i) => (i % 2 ? "bg-[#4a4a4a]" : "");
const headText = "grid h-[21px] items-start border-b border-[#2b4f70] pt-[2.500px] leading-[12px] tracking-[-0.120px] whitespace-nowrap";
const tableText = "font-['Liberation_Sans',sans-serif] text-[9.300px] text-white [-webkit-text-stroke:0.350px_currentColor]";

const Scroll = ({ ml, thumb }) => (
  <div className={`mt-[4px] h-[360px] w-[6px] shrink-0 rounded-[3px] bg-[#9a9a9a] ${ml}`}>
    <div className={`w-full rounded-[3px] border border-[#8a8a8a] bg-[#505050] ${thumb}`} />
  </div>
);

const Slicer = ({ label, value, w, pt }) => (
  <div className={`flex flex-col ${w} ${pt} font-['Liberation_Sans',sans-serif] text-white`}>
    <div className="flex h-[12px] items-center justify-between pr-[2px] pl-[2px] text-[10.600px] leading-[12px] font-bold tracking-[-0.050px]">
      {label}
      <svg width="9" height="6" viewBox="0 0 9 6" fill="none"><path d="M0.500 0.800L4.500 4.800L8.500 0.800" stroke="#c8c8c8" /></svg>
    </div>
    <div className="mt-[5px] flex h-[18px] items-center justify-between border border-[#a0a0a0] pr-[3px] pl-[4px] text-[9.500px] text-[#d0d0d0] [-webkit-text-stroke:0.200px_currentColor]">
      {value}
      <svg width="10" height="6" viewBox="0 0 10 6" fill="none" className="mt-[2px]"><path d="M0.500 0.800L5 5L9.500 0.800" stroke="#c8c8c8" /></svg>
    </div>
  </div>
);

const Report = () => (
  <div className="mt-[13px] ml-[461px] flex h-[1000px] w-[864px] flex-col bg-[#3a3a3a] pl-[6px] shadow-[0_0_12px_4px_#999]">
    <div className="mt-[13px] flex h-[56px] items-center">
      <Svg w={26} h={26} className="ml-[3px]">
        <circle cx="13" cy="13" r="12.200" stroke="#d6d6d6" strokeWidth="1.600" />
        <path d="M21 13H6M11.500 6.500L5.500 13L11.500 19.500" stroke="#d6d6d6" strokeWidth="1.800" />
      </Svg>
      <div className={`ml-[4px] h-[56px] w-[809px] ${card} pt-[4px] text-center font-['Liberation_Serif',serif] text-[28.900px] leading-[35px] font-bold text-white`}>
        Patients History Analysis
      </div>
    </div>
    <div className="flex h-[72px] justify-between pr-[21px] pl-[13px]">
      <Slicer label="HTN_Status" value="1" w="w-[121px]" pt="pt-[18px]" />
      <Slicer label="DM Status" value="All" w="w-[123px]" pt="pt-[24px]" />
    </div>
    <div className="flex h-[229px] items-start">
      <div className={`${card} h-[229px] w-[283px]`}>
        <CardTitle h="h-[39px]">Patients count of Cancer Medical &amp; Family<br />History by Age Bin</CardTitle>
        <Donut />
      </div>
      <div className={`${card} ml-[15px] h-[208px] w-[197px]`}>
        <CardTitle h="h-[39px]">Patient Count by Stroke Family<br />History</CardTitle>
        <Pie />
      </div>
      <div className={`${card} ml-[15px] h-[208px] w-[332px]`}>
        <CardTitle h="h-[25px]">Patient with HTN after &amp; before Diabetes</CardTitle>
        <Bars />
      </div>
    </div>
    <div className="mt-[11px] flex h-[420px] items-start">
      <div className={`${card} h-[420px] w-[272px]`}>
        <CardTitle h="h-[25px]">Patients Diabetic Duration by Alcohol level</CardTitle>
        <div className={`flex pl-[9px] ${tableText}`}>
          <div className="w-[229px]">
            <div className={`${headText} grid-cols-[83px_64px_82px]`}>
              <span className="pl-[3px]">PatientID_Visit</span>
              <span className="pl-[3px]">Alcohol Level<span className="block h-0 w-0 border-x-[3px] border-b-[3px] border-x-transparent border-b-white" /></span>
              <span className="pr-[4px] text-right">Diabetes_Duration</span>
            </div>
            {alcohol.map(([id, lv, n], i) => (
              <div key={i} className={`${rowBase} ${band(i)} grid-cols-[83px_64px_82px]`}>
                <span className="pl-[3px] text-[#2878bd] [-webkit-text-stroke:0px]">{id}</span>
                <span className={`pl-[3px] whitespace-nowrap ${levels[lv][1]}`}>{levels[lv][0]}</span>
                <span className="pr-[3px] text-right">{n}</span>
              </div>
            ))}
          </div>
          <Scroll ml="ml-[11px]" thumb="h-[15px]" />
        </div>
      </div>
      <div className={`${card} ml-[6px] h-[420px] w-[240px]`}>
        <CardTitle h="h-[25px]">Patient with Diabetic &amp; HTN Start Age</CardTitle>
        <div className={`flex pl-[8px] ${tableText}`}>
          <div className="w-[208px]">
            <div className={`${headText} grid-cols-[45px_86px_77px]`}>
              <span className="pl-[3px]">PatientID</span>
              <span className="pr-[4px] text-right">T1_HTN_Start_Age</span>
              <span className="pr-[5px] text-right">T1_Diabetic_Age</span>
            </div>
            {ages.map(([id, a, b], i) => (
              <div key={i} className={`${rowBase} ${band(i)} grid-cols-[45px_86px_77px]`}>
                <span className="pl-[3px]">{id}</span>
                <span className="pr-[3px] text-right">{a}</span>
                <span className="pr-[4px] text-right">{b}</span>
              </div>
            ))}
          </div>
          <Scroll ml="ml-[1px]" thumb="h-[134px]" />
        </div>
      </div>
      <div className={`${card} ml-[28px] h-[420px] w-[296px]`}>
        <CardTitle h="h-[39px]">Diabetic Patients who aretaking Insulin with their<br />Reading</CardTitle>
        <div className={`flex pl-[9px] ${tableText}`}>
          <div className="w-[219px]">
            <div className={`${headText} grid-cols-[45px_67px_33px_74px]`}>
              <span className="pl-[3px]">PatientID</span>
              <span className="pl-[3px]">HbA1cRange<span className="block h-0 w-0 border-x-[3px] border-t-[3px] border-x-transparent border-t-white" /></span>
              <span className="pl-[3px]">Insulin</span>
              <span className="pr-[4px] text-right">Insulin Readings</span>
            </div>
            {insulin.map(([id, lv, f, n], i) => (
              <div key={i} className={`${rowBase} ${band(i)} grid-cols-[45px_67px_33px_74px]`}>
                <span className="pl-[3px]">{id}</span>
                <span className="pl-[2px]">{lv === "P" ? "Prediabetes" : "Normal"}</span>
                <span className="pl-[2px]">{f}</span>
                <span className="pr-[3px] text-right">{n}</span>
              </div>
            ))}
          </div>
          <Scroll ml="ml-[45px]" thumb="h-[112px]" />
        </div>
      </div>
    </div>
  </div>
);

/* ---------- side rails ---------- */

const LeftRail = () => (
  <aside className="flex h-[790px] w-[41px] shrink-0 flex-col items-start border-r border-[#dddbd9] bg-[#f3f2f1]">
    <Svg w={40} h={250}>
      <g stroke="#222" strokeWidth="1.600"><path d="M7.500 16V32.500H24" /><rect x="10" y="20" width="3" height="10" fill="#999" /><rect x="15" y="23" width="3" height="7" fill="#999" /><rect x="20" y="18" width="3" height="12" fill="#999" /></g>
      <g stroke="#797775" strokeWidth="1.500">
        <rect x="6" y="65" width="19" height="18" /><path d="M6 68.500H25M6 73.500H25M6 78.500H25M12.500 68V83M19 68V83" />
        <path d="M9 121V115.500H17M9 129V132H17" /><rect x="17" y="114" width="9.500" height="9" fill="#f3f2f1" /><path d="M17 117H26" /><rect x="4.500" y="120" width="9.500" height="9" fill="#f3f2f1" /><path d="M4.500 123.500H14" /><rect x="17" y="126.500" width="9.500" height="9" fill="#f3f2f1" /><path d="M17 130H26" />
        <path d="M8.500 177V167Q8.500 165 10.500 165H15L21 171V176M15 165V171H21M19 167L23.500 173V180Q23.500 183 20.500 184" strokeWidth="1.300" />
        <path d="M8.500 226V217Q8.500 215 10.500 215H16L22 221V226M16 215V221H22" strokeWidth="1.300" />
      </g>
      <text x="2.500" y="184.500" fontSize="8.500" fontWeight="600" textLength="17" lengthAdjust="spacingAndGlyphs" fill="#6f6d6b" fontFamily="Open Sans">DAX</text>
      <text x="3.500" y="234.500" fontSize="8.500" fontWeight="600" textLength="23" lengthAdjust="spacingAndGlyphs" fill="#6f6d6b" fontFamily="Open Sans">TMDL</text>
    </Svg>
  </aside>
);

const FilterPane = () => (
  <aside className="flex h-[746px] w-[41px] shrink-0 flex-col items-center border-l border-[#8a8886] bg-[#3a3a3a] text-white">
    <Svg w={40} h={70}>
      <path d="M20 15.500L13 23.500L20 31.500M27.500 15.500L20.500 23.500L27.500 31.500" stroke="#fff" strokeWidth="1.800" />
      <path d="M30.500 51.500V66L23.500 61H16.500V56.500H23.500Z" stroke="#fff" strokeWidth="1.800" strokeLinejoin="round" />
    </Svg>
    <div className="mt-[7px] mr-[1px] text-[17.500px] leading-[20px] font-bold tracking-[-0.150px] [writing-mode:vertical-rl]">Filters</div>
  </aside>
);

const RightRail = () => (
  <aside className="flex h-[790px] w-[29px] shrink-0 flex-col overflow-hidden bg-[#faf9f8]">
    <svg width="29" height="250" viewBox="1869 183 29 250" fill="none" className="block">
      <g stroke="#444" strokeWidth="1.500" fill="#fff">
        <path d="M1882 196V211C1882 216 1901 216 1901 211V196" /><ellipse cx="1891.500" cy="196" rx="9.500" ry="3" />
        <path d="M1881 242H1887V254.500H1881ZM1887 233H1894V254.500H1887ZM1894 238H1900V254H1894Z" />
        <path d="M1881 292V282H1887V292M1887 294V273H1894V290M1894 278H1900" />
        <path d="M1883.500 313H1897V334L1890 328.500L1883.500 334Z" />
      </g>
      <path d="M1892 243V253C1892 256 1900 256 1900 255V241C1895 241 1892 241 1892 243Z" fill="#fff" stroke="#d9730d" strokeWidth="1.600" />
      <path d="M1883 295C1887 294 1885 290 1890 289Q1895 289 1894 293Q1891 296 1883 295Z" fill="#83beec" stroke="#1f6fb5" strokeWidth="1.300" />
      <path d="M1893 290L1899 283" stroke="#444" strokeWidth="2.500" />
      <rect x="1887.500" y="352.500" width="14" height="14" fill="#f8d588" stroke="#d9730d" strokeWidth="1.500" />
      <rect x="1879.500" y="362.500" width="12" height="12" fill="#fff" stroke="#444" strokeWidth="1.500" />
      <path d="M1892.500 360V376L1896 372L1899 377V366Z" fill="#fff" stroke="#333" strokeWidth="1.300" />
      <path d="M1879 403H1900M1890 392V414" stroke="#111" strokeWidth="1.800" />
    </svg>
    <svg width="29" height="24" viewBox="0 0 29 24" fill="none" className="mt-[508px] block">
      <circle cx="20" cy="12.500" r="3.500" stroke="#333" strokeWidth="1.500" />
      <path d="M17 2H23L24 5.500L27 7L30 6L33 12L30 15V18L27 20L24 19L23 23H17L16 19.500L13 18L10.500 19L8.500 14L11.500 12.500L8.500 10L11 6L14 7L16 5.500Z" stroke="#333" strokeWidth="1.500" strokeLinejoin="round" />
    </svg>
  </aside>
);

const tabs = [
  ["Summrize", "w-[117px]"], ["Demographic", "w-[140px]"], ["BP", "w-[68px]"], ["Lab", "w-[75px]"], ["Patient History", "w-[152px]"], ["Cognitive & WalkingTest", "w-[213px]"], ["Opthalmological", "w-[161px]"],
];

const PageTabs = () => (
  <div className="flex h-[44px] border-b border-[#dddbd9] bg-[#f3f2f1]">
    <div className="flex w-[160px] shrink-0 border-r border-[#a19f9d]">
      <Svg w={159} h={43}>
        <rect x="15.500" y="10" width="23" height="13" fill="#fff" stroke="#555" strokeWidth="1.600" />
        <path d="M27 23V26M23 26H31" stroke="#555" strokeWidth="1.600" />
        <rect x="13" y="35" width="30" height="3" rx="1" fill="#117865" />
        <rect x="75.500" y="6.500" width="15" height="24" rx="1" fill="#fff" stroke="#555" strokeWidth="1.700" />
        <rect x="82" y="26" width="2.500" height="1.800" fill="#555" />
        <path d="M123 16V27L117.500 21.500ZM145.500 16V27L151 21.500Z" fill="#c8c6c4" />
      </Svg>
    </div>
    {tabs.map(([t, w]) => {
      const on = t === "Patient History";
      const long = t.length > 14;
      return (
        <div key={t} className={`relative flex h-[43px] shrink-0 items-center justify-center border-r border-[#c8c6c4] bg-white text-[14.200px] whitespace-nowrap text-[#242424] ${w} ${on ? "border-b-[5px] border-b-[#117865] pt-[7px] font-semibold tracking-[-0.100px]" : long ? "pt-[2px] tracking-[0.080px]" : "pt-[2px] tracking-[-0.080px]"}`}>
          {t}
          {on && <span className="absolute top-[2px] right-[4px] text-[13px] leading-[18px]">x</span>}
        </div>
      );
    })}
    <div className="flex h-[43px] w-[48px] items-center justify-center bg-[#117865]">
      <svg width="14" height="14" viewBox="0 0 14 14" className="-mt-[2px]"><path d="M0 7H14M7 0V14" stroke="#fff" strokeWidth="3.200" /></svg>
    </div>
  </div>
);

const StatusBar = () => (
  <footer className="flex h-[26px] items-center justify-between overflow-hidden bg-[#f3f2f1] text-[14px] text-[#484644]">
    <span className="mt-[7px] ml-[-4px] tracking-[0.100px] whitespace-nowrap">Page 5 of 7</span>
    <div className="mt-[4px] flex items-center">
      <Svg w={160} h={18}>
        <path d="M2 10H7" stroke="#444" strokeWidth="1.500" />
        <path d="M12 10H136" stroke="#a19f9d" strokeWidth="1.200" />
        <path d="M75 6V13" stroke="#8a8886" />
        <rect x="41" y="3" width="5" height="13" fill="#555" />
        <path d="M144 10H154M149 5V15" stroke="#444" strokeWidth="1.500" />
      </Svg>
      <span className="ml-[10px] w-[50px] text-[14px] tracking-[0]">54%</span>
      <Svg w={34} h={18}>
        <rect x="3" y="3" width="20" height="13" stroke="#555" strokeWidth="1.400" />
        <path d="M7 9V6.500H10M16 6.500H19V9M19 11V13.500H16M10 13.500H7V11" stroke="#555" strokeWidth="1.300" />
      </Svg>
    </div>
  </footer>
);

export default function App() {
  return (
    <div className="flex h-[999px] w-[1898px] flex-col overflow-hidden bg-[#f3f2f1] font-['Open_Sans',sans-serif]">
      <TitleBar />
      <div className="h-[157px] bg-[#fafafa]">
        <Menu />
        <Ribbon />
      </div>
      <div className="flex h-[790px]">
        <LeftRail />
        <div className="flex w-[1828px] shrink-0 flex-col">
          <div className="flex h-[746px]">
            <main className="h-[746px] w-[1787px] shrink-0 overflow-hidden bg-[#3a3a3a]">
              <Report />
            </main>
            <FilterPane />
          </div>
          <PageTabs />
        </div>
        <RightRail />
      </div>
      <StatusBar />
    </div>
  );
}
